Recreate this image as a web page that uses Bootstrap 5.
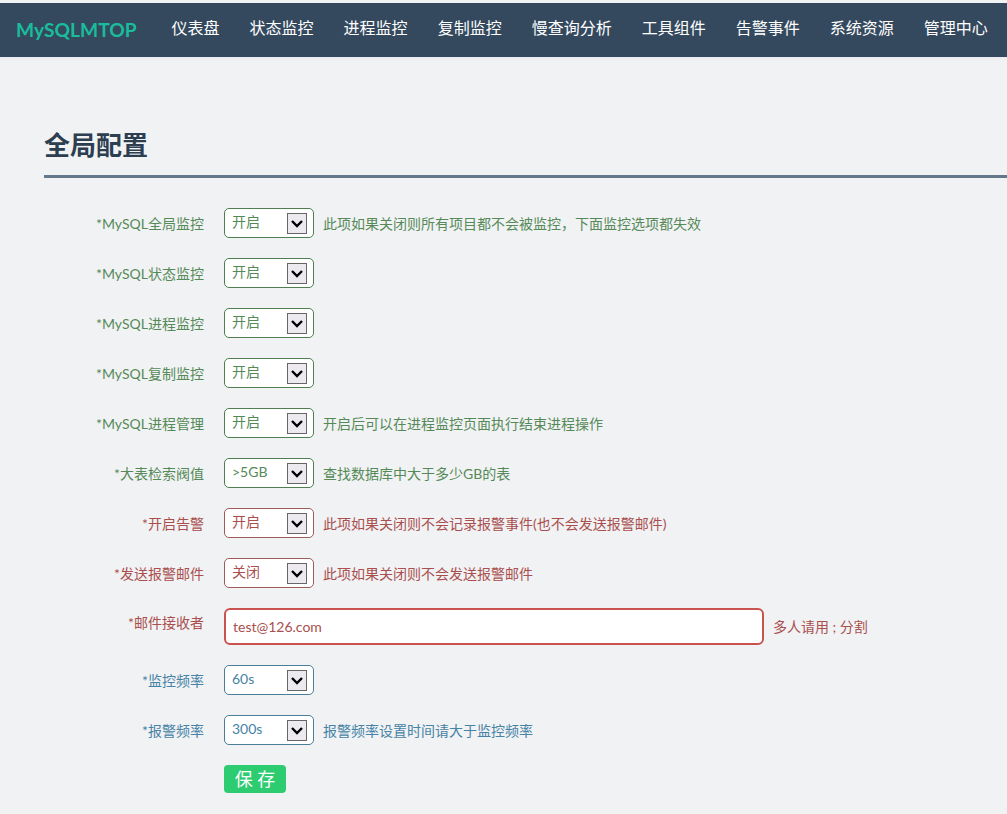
<!DOCTYPE html>
<html lang="zh-CN">
<head>
<meta charset="utf-8">
<title>全局配置</title>
<link href="https://cdn.jsdelivr.net/npm/bootstrap@5.3.0/dist/css/bootstrap.min.css" rel="stylesheet">
<style>
html,body{height:100%;}
body{background:#f1f2f4;font-family:"Lato","Noto Sans CJK SC",sans-serif;font-size:14px;color:#34495e;padding-top:3px;overflow:hidden;}
.top-bar{background:#34495e;height:54px;padding:0;flex-wrap:nowrap;justify-content:flex-start;box-shadow:0 2px 2px #e9ecf3;}
.top-brand{color:#1abc9c;font-size:19.2px;font-weight:700;margin:0 20px 0 16px;padding:0;line-height:52px;}
.top-brand:hover{color:#1abc9c;}
.top-bar .nav-link{color:#fff;font-size:16px;line-height:50px;height:54px;padding:0 15px;white-space:nowrap;}
.page-title{margin:68px 0 0 44px;padding-bottom:10px;border-bottom:3px solid #64788c;color:#2c3e50;font-size:26px;font-weight:700;line-height:40px;}
.cfg-form{margin-top:30px;}
.cfg-row{display:flex;align-items:flex-start;margin-bottom:20px;}
.cfg-label{width:204px;flex:none;text-align:right;padding:5px 0 0;margin:0 20px 0 0;line-height:21px;}
.cfg-help{margin-left:9px;padding-top:5px;line-height:21px;white-space:nowrap;}
.cfg-select.form-select{width:90px;height:30px;padding:0 0 2px 7px;font-size:14px;line-height:26px;border-radius:5px;background-color:#fff;background-position:right 6px top 4px;background-size:20px 21px;background-image:url("data:image/svg+xml,%3Csvg xmlns='http://www.w3.org/2000/svg' viewBox='0 0 20 21'%3E%3Crect x='.5' y='.5' width='19' height='20' fill='%23ece9ef' stroke='%23666'/%3E%3Cpath d='M5 8l5 5 5-5' fill='none' stroke='%23000' stroke-width='2.4'/%3E%3C/svg%3E");}
.cfg-select.form-select:focus,.cfg-input.form-control:focus{box-shadow:none;}
.cfg-input.form-control{width:540px;height:37px;padding:0 7px;font-size:14px;border-width:2px;border-radius:6px;background:#fff;}
.tone-ok,.tone-ok .cfg-select{color:#558a58;}
.tone-ok .cfg-select{border-color:#4f7f50;}
.tone-err,.tone-err .cfg-select,.tone-err .cfg-input{color:#a94f4e;}
.tone-err .cfg-select{border-color:#a05a5a;}
.tone-err .cfg-input{border-color:#c9534f;}
.tone-info,.tone-info .cfg-select{color:#4683a5;}
.tone-info .cfg-select{border-color:#4a7d98;}
.row-input .cfg-label{padding-top:4px;}
.row-input .cfg-help{padding-top:8px;}
.save-btn.btn{margin-left:224px;width:62px;height:28px;padding:0;background:#2ecc71;border:0;border-radius:4px;color:#fff;font-size:18px;line-height:28px;display:block;}
</style>
</head>
<body>
<nav class="navbar top-bar">
  <a class="navbar-brand top-brand" href="#">MySQLMTOP</a>
  <ul class="nav flex-nowrap">
    <li class="nav-item"><a class="nav-link" href="#">仪表盘</a></li>
    <li class="nav-item"><a class="nav-link" href="#">状态监控</a></li>
    <li class="nav-item"><a class="nav-link" href="#">进程监控</a></li>
    <li class="nav-item"><a class="nav-link" href="#">复制监控</a></li>
    <li class="nav-item"><a class="nav-link" href="#">慢查询分析</a></li>
    <li class="nav-item"><a class="nav-link" href="#">工具组件</a></li>
    <li class="nav-item"><a class="nav-link" href="#">告警事件</a></li>
    <li class="nav-item"><a class="nav-link" href="#">系统资源</a></li>
    <li class="nav-item"><a class="nav-link" href="#">管理中心</a></li>
  </ul>
</nav>
<main>
  <h1 class="page-title">全局配置</h1>
  <form class="cfg-form">
    <div class="cfg-row tone-ok"><label class="cfg-label">*MySQL全局监控</label><select class="form-select cfg-select"><option>开启</option><option>关闭</option></select><span class="cfg-help">此项如果关闭则所有项目都不会被监控，下面监控选项都失效</span></div>
    <div class="cfg-row tone-ok"><label class="cfg-label">*MySQL状态监控</label><select class="form-select cfg-select"><option>开启</option><option>关闭</option></select></div>
    <div class="cfg-row tone-ok"><label class="cfg-label">*MySQL进程监控</label><select class="form-select cfg-select"><option>开启</option><option>关闭</option></select></div>
    <div class="cfg-row tone-ok"><label class="cfg-label">*MySQL复制监控</label><select class="form-select cfg-select"><option>开启</option><option>关闭</option></select></div>
    <div class="cfg-row tone-ok"><label class="cfg-label">*MySQL进程管理</label><select class="form-select cfg-select"><option>开启</option><option>关闭</option></select><span class="cfg-help">开启后可以在进程监控页面执行结束进程操作</span></div>
    <div class="cfg-row tone-ok"><label class="cfg-label">*大表检索阀值</label><select class="form-select cfg-select"><option>&gt;5GB</option><option>&gt;10GB</option></select><span class="cfg-help">查找数据库中大于多少GB的表</span></div>
    <div class="cfg-row tone-err"><label class="cfg-label">*开启告警</label><select class="form-select cfg-select"><option>开启</option><option>关闭</option></select><span class="cfg-help">此项如果关闭则不会记录报警事件(也不会发送报警邮件)</span></div>
    <div class="cfg-row tone-err"><label class="cfg-label">*发送报警邮件</label><select class="form-select cfg-select"><option>关闭</option><option>开启</option></select><span class="cfg-help">此项如果关闭则不会发送报警邮件</span></div>
    <div class="cfg-row row-input tone-err"><label class="cfg-label">*邮件接收者</label><input class="form-control cfg-input" type="text" value="test@126.com"><span class="cfg-help">多人请用 ; 分割</span></div>
    <div class="cfg-row tone-info"><label class="cfg-label">*监控频率</label><select class="form-select cfg-select"><option>60s</option><option>300s</option></select></div>
    <div class="cfg-row tone-info"><label class="cfg-label">*报警频率</label><select class="form-select cfg-select"><option>300s</option><option>60s</option></select><span class="cfg-help">报警频率设置时间请大于监控频率</span></div>
    <button type="button" class="btn save-btn">保 存</button>
  </form>
</main>
<script src="https://cdn.jsdelivr.net/npm/bootstrap@5.3.0/dist/js/bootstrap.bundle.min.js"></script>
</body>
</html>
